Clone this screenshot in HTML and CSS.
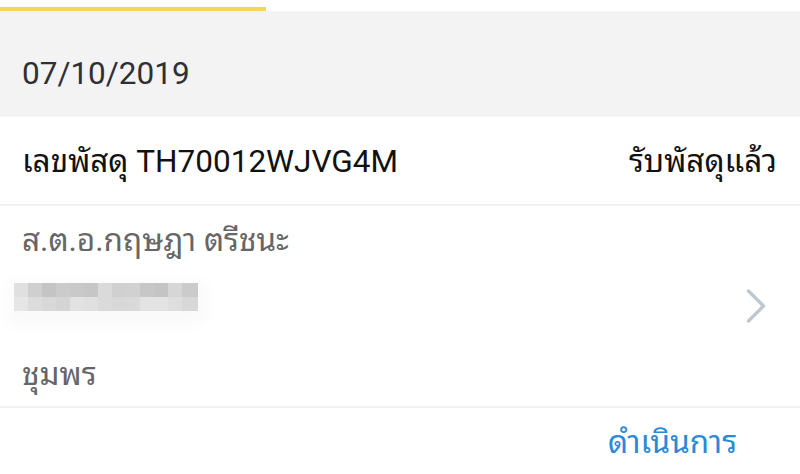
FILE: index.html
```html
<!DOCTYPE html>
<html lang="th">
<head>
    <meta charset="UTF-8">
    <meta name="viewport" content="width=device-width, initial-scale=1.0">
    <title>Parcel</title>
    <link rel="stylesheet" href="styles.css">
</head>
<body>
    <div class="progress-track">
        <div class="progress-bar"></div>
    </div>

    <div class="date-header">07/10/2019</div>

    <div class="parcel-row">
        <span class="parcel-no">เลขพัสดุ TH70012WJVG4M</span>
        <span class="parcel-status">รับพัสดุแล้ว</span>
    </div>

    <div class="receiver">
        <div class="receiver-info">
            <div class="receiver-name">ส.ต.อ.กฤษฎา ตรีชนะ</div>
            <div class="blurred"></div>
            <div class="receiver-city">ชุมพร</div>
        </div>
        <svg class="chevron" width="20" height="34" viewBox="0 0 20 34">
            <polyline points="2.5,2 17.5,17 2.5,32" fill="none" stroke="#bfc7cf" stroke-width="3.4" stroke-linecap="round" stroke-linejoin="round"/>
        </svg>
    </div>

    <div class="actions">
        <button class="action-btn">ดำเนินการ</button>
    </div>
</body>
</html>
```

FILE: styles.css
```css
body {
    margin: 0;
    background: #fff;
    font-family: 'Roboto', 'Noto Sans Thai Looped', 'Noto Sans Thai UI', 'Loma', 'Garuda', 'Waree', 'Noto Sans Thai', 'Noto Sans', sans-serif;
    font-size: 31.5px;
    line-height: 36px;
    width: 800px;
    overflow: hidden;
}

.progress-track {
    padding-top: 7px;
}

.progress-bar {
    width: 266px;
    height: 4px;
    background: #f8d35e;
}

.date-header {
    background: #f3f3f3;
    height: 106px;
    box-sizing: border-box;
    padding: 45px 22px 0;
    color: #2f2f36;
}

.parcel-row {
    display: flex;
    justify-content: space-between;
    padding: 27px 23px 24px 22px;
    color: #111;
    border-bottom: 2px solid #f1f1f1;
}

.receiver {
    display: flex;
    align-items: center;
    justify-content: space-between;
    border-bottom: 2px solid #f1f1f1;
}

.receiver-info {
    padding: 17px 22px 13px;
    color: #666;
}

.blurred {
    width: 184px;
    height: 28px;
    margin: 24px 0 46px -8px;
    background:
        linear-gradient(to right, #e0e0e0 0 14px, #cfcfcf 14px 28px, #c4c4c4 28px 42px, #cbcbcb 42px 56px, #c9c9c9 56px 70px, #c6c6c6 70px 84px, #dadada 84px 98px, #d0d0d0 98px 112px, #d1d1d1 112px 126px, #c7c7c7 126px 140px, #c4c4c4 140px 154px, #d6d6d6 154px 168px, #cbcbcb 168px) top / 100% 50% no-repeat,
        linear-gradient(to right, #e6e6e6 0 14px, #dcdcdc 14px 28px, #d8d8d8 28px 42px, #d4d4d4 42px 56px, #e2e2e2 56px 70px, #e0e0e0 70px 84px, #dadada 84px 98px, #d8d8d8 98px 112px, #d9d9d9 112px 126px, #e3e3e3 126px 140px, #e3e3e3 140px 154px, #dedede 154px 168px, #d8d8d8 168px) bottom / 100% 50% no-repeat;
    box-shadow: 0 6px 16px 8px #fafafa;
}

.chevron {
    margin-right: 34px;
}

.actions {
    display: flex;
    justify-content: flex-end;
    padding: 17px 63px 0 0;
}

.action-btn {
    font: inherit;
    color: #2a8ad6;
    background: none;
    border: none;
    padding: 0;
    cursor: pointer;
}
```
